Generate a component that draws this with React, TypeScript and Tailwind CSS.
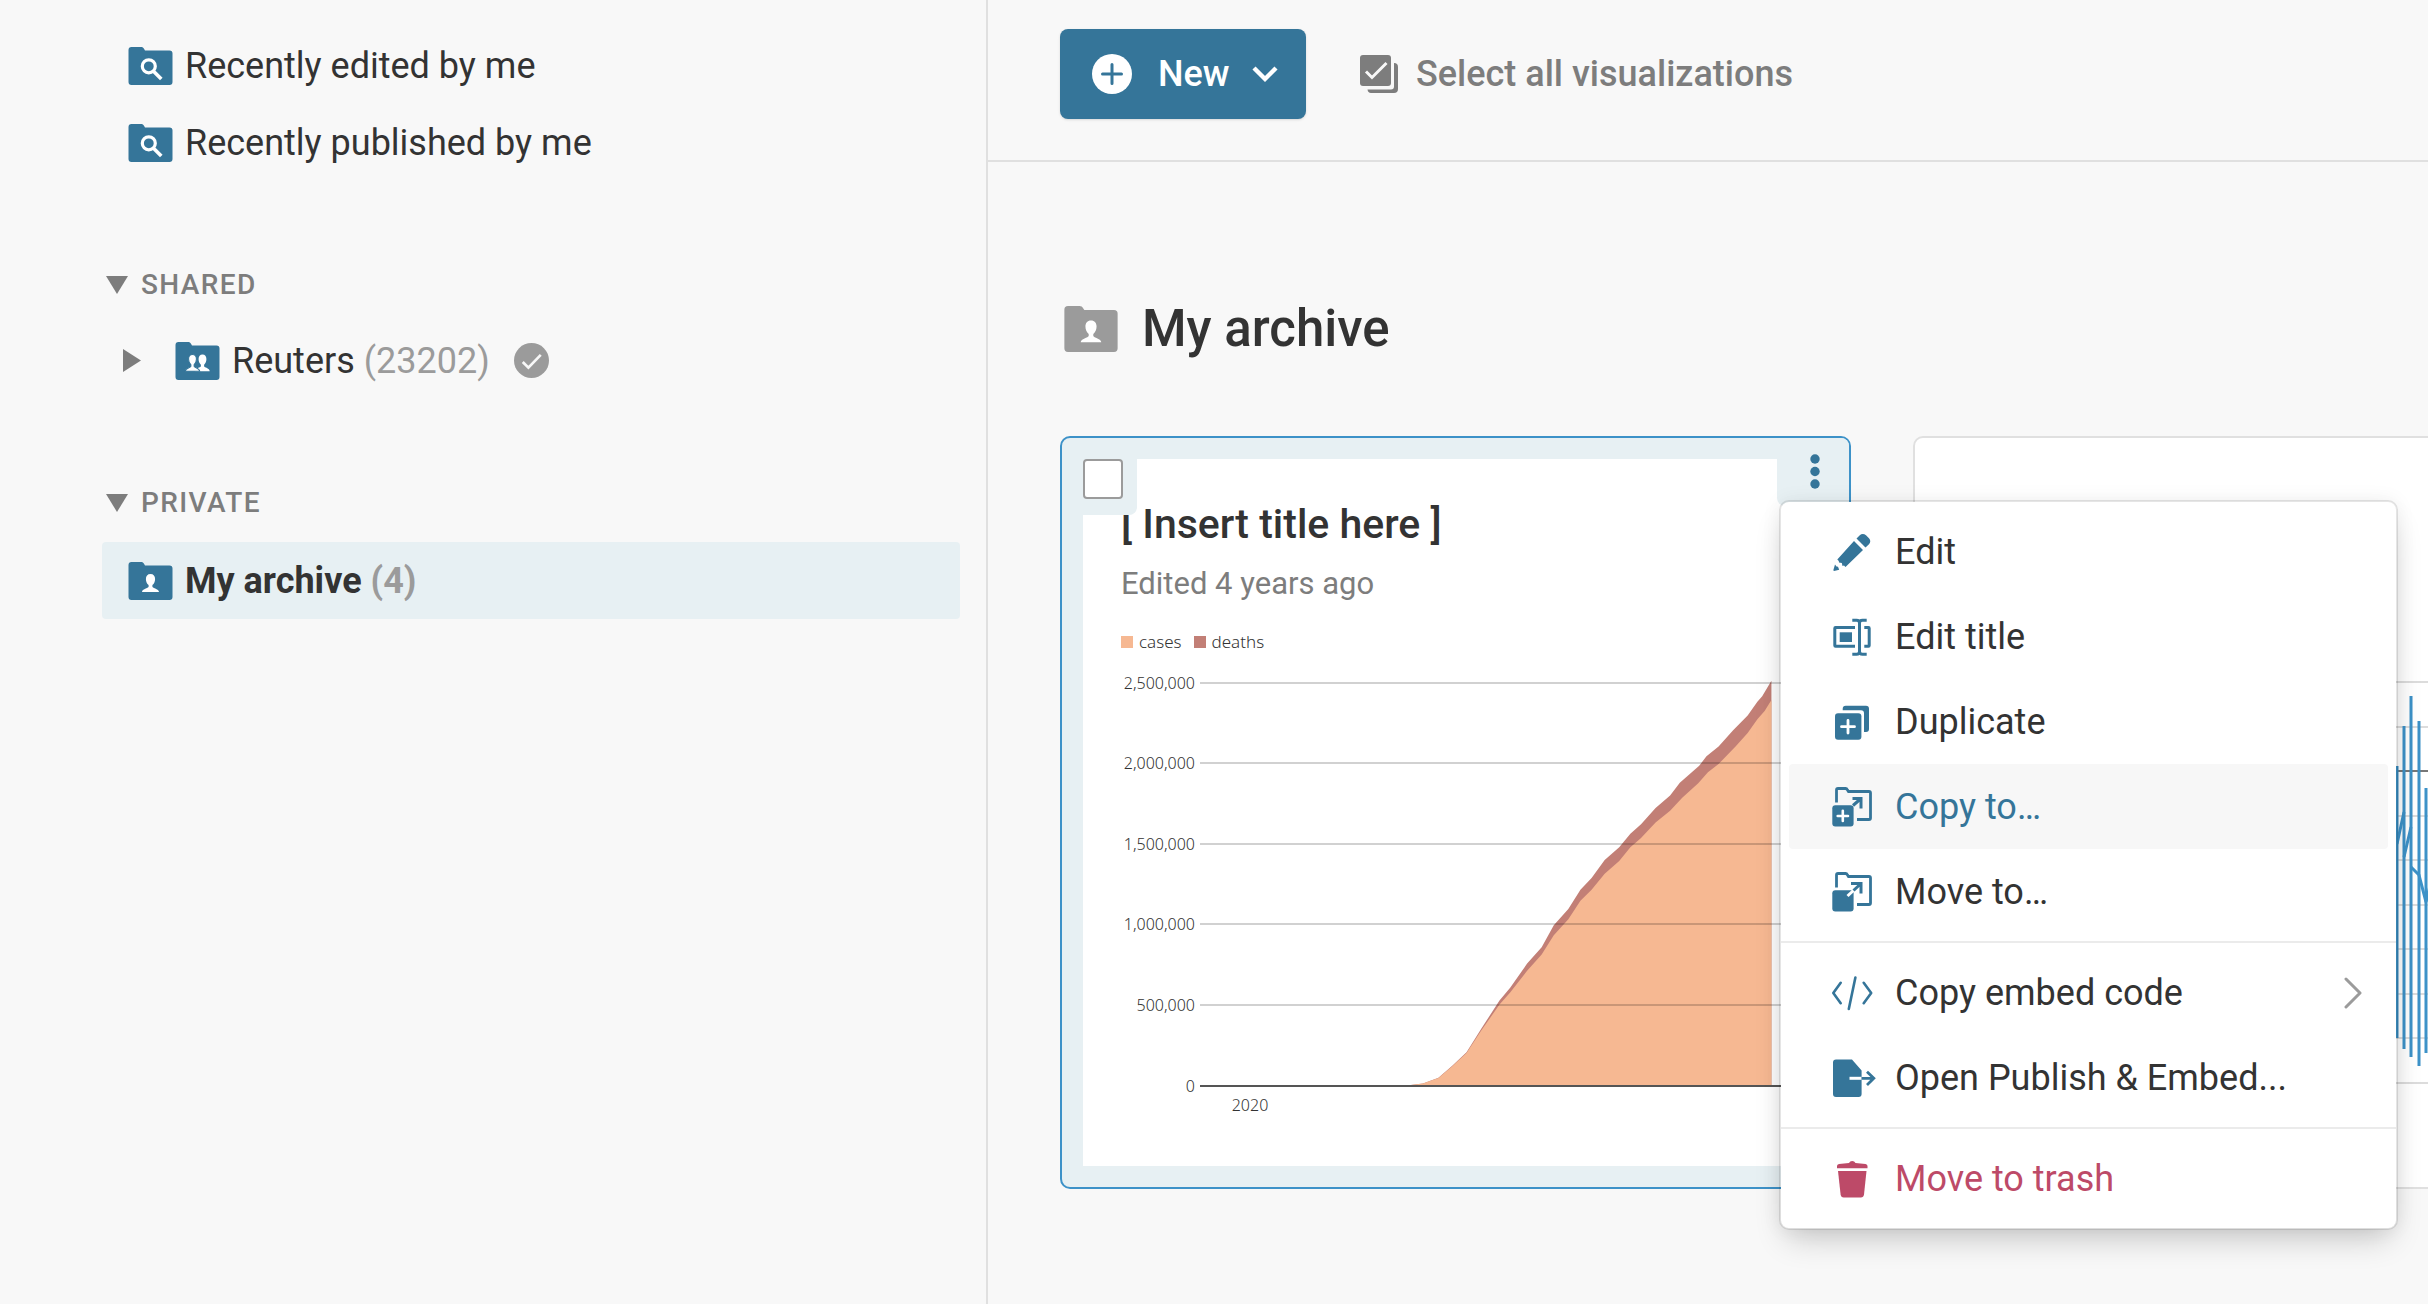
import React from "react";

type IconProps = { className?: string };

function FolderShape({ className, children }: IconProps & { children?: React.ReactNode }) {
  return (
    <svg viewBox="0 0 44 38" className={className} aria-hidden="true">
      <path
        fill="currentColor"
        d="M3 0H12.500C14 0 14.800 .600 15.500 1.800L16.500 3.400H41A3 3 0 0 1 44 6.400V35A3 3 0 0 1 41 38H3A3 3 0 0 1 0 35V3A3 3 0 0 1 3 0Z"
      />
      {children}
    </svg>
  );
}

function SearchFolder({ className }: IconProps) {
  return (
    <FolderShape className={className}>
      <g fill="none" stroke="#fff" strokeWidth="3.200">
        <circle cx="20.300" cy="19.300" r="6.500" />
        <path d="M25 24.200L32.800 32" strokeWidth="3.600" />
      </g>
    </FolderShape>
  );
}

const BUST =
  "M0 -6.500C3 -6.500 4.600 -4.400 4.600 -1.500C4.600 1 3.600 3.300 1.900 4.600V6.200C2.200 7.600 8.500 8.400 8.500 11.500H-8.500C-8.500 8.400 -2.200 7.600 -1.900 6.200V4.600C-3.600 3.300 -4.600 1 -4.600 -1.500C-4.600 -4.400 -3 -6.500 0 -6.500Z";

function PersonFolder({ className }: IconProps) {
  return (
    <FolderShape className={className}>
      <path d={BUST} fill="#fff" transform="translate(22 18.500)" />
    </FolderShape>
  );
}

function TeamFolder({ className }: IconProps) {
  return (
    <FolderShape className={className}>
      <path d={BUST} fill="#fff" transform="translate(27 18.500) scale(.85 .93)" />
      <path d={BUST} fill="#fff" stroke="#357599" strokeWidth="1.200" transform="translate(17 18.500) scale(.85 .93)" />
    </FolderShape>
  );
}

function Triangle({ open }: { open: boolean }) {
  return open ? (
    <svg viewBox="0 0 22 18" className="h-[18px] w-[22px]" aria-hidden="true">
      <path d="M0 0H22L11 18Z" fill="currentColor" />
    </svg>
  ) : (
    <svg viewBox="0 0 18 23" className="h-[23px] w-[18px]" aria-hidden="true">
      <path d="M0 0L18 11.500L0 23Z" fill="currentColor" />
    </svg>
  );
}

function MenuIcon({ children }: { children: React.ReactNode }) {
  return (
    <svg viewBox="0 0 40 40" className="h-10 w-10 shrink-0 overflow-visible" fill="currentColor" aria-hidden="true">
      {children}
    </svg>
  );
}

const pencilIcon = (
  <MenuIcon>
    <path d="M22 9L31 18L13.500 35L12 33.500L10.500 34L9.800 31L7 30.500L6.800 29L5.300 27.500Z" />
    <path d="M24.500 6.500L27.800 3.300C29.500 1.600 32 1.600 34 3.300L37 6.300C38.700 8.300 38.700 10.500 37 12.200L33.500 15.500Z" />
    <path d="M3 32.500L4.500 34.500L6 34.800L7.200 37.800L2 39L1.300 38.300Z" />
  </MenuIcon>
);

const renameIcon = (
  <MenuIcon>
    <g fill="none" stroke="currentColor" strokeWidth="3">
      <path d="M23 10.500H3.500Q2.800 10.500 2.800 11.200V28.500Q2.800 29.200 3.500 29.200H23" />
      <path d="M32.300 10.500H36.500Q37.200 10.500 37.200 11.200V28.500Q37.200 29.200 36.500 29.200H32.300" />
      <path d="M20.300 3.300H24.500Q27.500 3.300 27.500 6V34.500Q27.500 37.200 24.500 37.200H20.300M34.700 3.300H30.500Q27.500 3.300 27.500 6M27.500 34.500Q27.500 37.200 30.500 37.200H34.700" />
    </g>
    <rect x="7.700" y="15.300" width="12.300" height="9.700" />
  </MenuIcon>
);

const duplicateIcon = (
  <MenuIcon>
    <rect x="3" y="11.300" width="26.400" height="26.400" rx="3" />
    <path d="M10.700 8.300V6.700A3 3 0 0 1 13.700 3.700H34A3 3 0 0 1 37 6.700V27A3 3 0 0 1 34 30H32V11.300A3 3 0 0 0 29 8.300Z" />
    <path d="M16 18.500V31M9.500 24.700H22.500" stroke="#fff" strokeWidth="2.800" strokeLinecap="round" />
  </MenuIcon>
);

const folderOutline = (
  <path
    d="M4.500 15.500V3Q4.500 1.500 6 1.500H13.500Q14.800 1.500 15.500 3L16.500 4.500H37Q38.500 4.500 38.500 6V31Q38.500 32.500 37 32.500H25"
    fill="none"
    stroke="currentColor"
    strokeWidth="2.800"
  />
);

const copyToIcon = (
  <MenuIcon>
    {folderOutline}
    <rect x="0.300" y="18.300" width="21.300" height="21.300" rx="3" />
    <path d="M10.800 23.800V34M5.700 29H16" stroke="#fff" strokeWidth="2.600" strokeLinecap="round" />
    <path d="M20.500 11.500H29V21.500M29 11.500L21 18.500" fill="none" stroke="currentColor" strokeWidth="3" />
  </MenuIcon>
);

const moveToIcon = (
  <MenuIcon>
    {folderOutline}
    <rect x="0.300" y="18.300" width="21.300" height="21.300" rx="3" />
    <path d="M15.500 24L22 18" stroke="#fff" strokeWidth="3" />
    <path d="M19 11.500H29V21.500M29 11.500L21.500 18.500" fill="none" stroke="currentColor" strokeWidth="3" />
  </MenuIcon>
);

const codeIcon = (
  <MenuIcon>
    <path
      d="M8.700 9.800L1.300 20L8.700 30.200M31.700 9.800L39.200 20L31.700 30.200M23.400 4.500L16.800 36"
      fill="none"
      stroke="currentColor"
      strokeWidth="2.600"
      strokeLinecap="round"
      strokeLinejoin="round"
    />
  </MenuIcon>
);

const publishIcon = (
  <MenuIcon>
    <path d="M4 1.500H20L29.600 12.500V36A3 3 0 0 1 26.600 39H4A3 3 0 0 1 1 36V4.500A3 3 0 0 1 4 1.500Z" />
    <path d="M17.500 20.300H29.600" stroke="#fff" strokeWidth="3" />
    <path d="M29.600 20.300H41.500M35 13.700L41.800 20.300L35 27" fill="none" stroke="currentColor" strokeWidth="2.800" />
  </MenuIcon>
);

const trashIcon = (
  <MenuIcon>
    <path d="M5 9.300V7Q5 5.500 7 5L17 3.900Q18 2 20.200 2T23.500 3.900L33.500 5Q35.500 5.500 35.500 7V9.300Z" />
    <path d="M6 12H34.500L32 35.500Q31.600 38.500 28.800 38.500H11.700Q9 38.500 8.600 35.500Z" />
  </MenuIcon>
);

function SidebarHeading({ label }: { label: string }) {
  return (
    <h2 className="mt-[66px] h-[75px]">
      <button type="button" className="flex h-full items-center gap-[13px] pl-1 text-[28px] font-medium uppercase tracking-wider text-[#7d7d7d]">
        <Triangle open />
        {label}
      </button>
    </h2>
  );
}

function Sidebar() {
  return (
    <aside className="w-[988px] shrink-0 border-r-2 border-[#e0e0e0] pt-[27px] pr-[26px] pl-[102px] text-[36px]">
      <nav>
        <a href="#edited" className="flex h-[77px] items-center gap-3 pl-[26px]">
          <SearchFolder className="h-[38px] w-[45px] text-[#357599]" />
          Recently edited by me
        </a>
        <a href="#published" className="flex h-[77px] items-center gap-3 pl-[26px]">
          <SearchFolder className="h-[38px] w-[45px] text-[#357599]" />
          Recently published by me
        </a>
        <SidebarHeading label="Shared" />
        <div className="flex h-[77px] items-center pl-[21px]">
          <button type="button" aria-label="Expand Reuters" className="mr-[34px] text-[#7d7d7d]">
            <Triangle open={false} />
          </button>
          <a href="#reuters" className="flex items-center gap-3">
            <TeamFolder className="h-[38px] w-[45px] text-[#357599]" />
            <span>
              Reuters <span className="text-[#9b9b9b]">(23202)</span>
            </span>
          </a>
          <svg viewBox="0 0 34 34" className="ml-6 size-[35px]" aria-hidden="true">
            <circle cx="17" cy="17" r="17" fill="#9b9b9b" />
            <path d="M8.500 18.500L14 24L26 11.500" fill="none" stroke="#f8f8f8" strokeWidth="2.600" />
          </svg>
        </div>
        <SidebarHeading label="Private" />
        <a href="#archive" className="mt-0.5 flex h-[77px] items-center gap-3 rounded bg-[#e7f0f3] pl-[26px] font-bold">
          <PersonFolder className="h-[38px] w-[45px] text-[#357599]" />
          <span>
            My archive <span className="text-[#9b9b9b]">(4)</span>
          </span>
        </a>
      </nav>
    </aside>
  );
}

function Toolbar() {
  return (
    <div className="flex items-center gap-[54px] border-b-2 border-[#e0e0e0] pt-[29px] pb-[41px] pl-[72px]">
      <button type="button" className="flex h-[90px] w-[246px] items-center rounded-lg bg-[#357599] pl-8 text-[36px] font-medium text-white shadow-sm">
        <svg viewBox="0 0 40 40" className="size-10" aria-hidden="true">
          <circle cx="20" cy="20" r="20" fill="#fff" />
          <path d="M20 10.500V29.500M10.500 20H29.500" stroke="#357599" strokeWidth="3" strokeLinecap="round" />
        </svg>
        <span className="ml-[26px]">New</span>
        <svg viewBox="0 0 26 18" className="ml-[22px] h-[18px] w-[26px]" aria-hidden="true">
          <path d="M2 3L13 14L24 3" fill="none" stroke="#fff" strokeWidth="4.400" />
        </svg>
      </button>
      <button type="button" className="flex items-center gap-[18px] text-[36px] font-medium text-[#7d7d7d]">
        <svg viewBox="0 0 38 38" className="size-[38px]" aria-hidden="true">
          <rect width="31" height="31" rx="3" fill="currentColor" />
          <path d="M34 8A4 4 0 0 1 38 12V34A4 4 0 0 1 34 38H11A4 4 0 0 1 7.500 34.500H31A3 3 0 0 0 34 31.500Z" fill="currentColor" />
          <path d="M6 16.500L12 22.500L26.500 8" fill="none" stroke="#f8f8f8" strokeWidth="3" />
        </svg>
        Select all visualizations
      </button>
    </div>
  );
}

const TICKS = [
  { label: "2,500,000", y: 23 },
  { label: "2,000,000", y: 103 },
  { label: "1,500,000", y: 184 },
  { label: "1,000,000", y: 264 },
  { label: "500,000", y: 345 },
];

const TOTAL_EDGE =
  "765,1224 790,1220 822,1204 850,1172 880,1134 910,1070 948,992 970,957 1005,890 1035,845 1060,785 1090,740 1115,687 1138,655 1165,605 1195,570 1218,533 1240,507 1270,462 1300,428 1320,393 1360,346 1375,320 1400,293 1430,248 1460,208 1480,170 1490,155 1509,112";
const CASES_EDGE =
  "765,1224 790,1220 822,1205 850,1173 880,1136 910,1075 948,1003 970,970 1005,910 1035,865 1060,812 1090,768 1115,717 1138,687 1165,643 1195,608 1218,570 1240,545 1270,502 1300,470 1325,434 1358,394 1378,364 1400,341 1435,293 1460,256 1480,218 1495,195 1509,165";

function CasesChart() {
  return (
    <svg viewBox="0 0 707 460" className="h-[460px] w-[707px] font-['Noto_Sans'] text-[16px] font-light" fill="#333" role="img" aria-label="Cases and deaths">
      <g transform="translate(-81 -20) scale(.4847 .3635)">
        <polygon points={TOTAL_EDGE + " 1509,1226 765,1226"} fill="#c27f76" />
        <polygon points={CASES_EDGE + " 1509,1226 765,1226"} fill="#f6b892" />
      </g>
      {TICKS.map((tick) => (
        <g key={tick.label}>
          <text x="74" y={tick.y + 6} textAnchor="end">
            {tick.label}
          </text>
          <path d={`M79 ${tick.y}H707`} stroke="#000" strokeOpacity=".18" strokeWidth="2" />
        </g>
      ))}
      <text x="74" y="432" textAnchor="end">
        0
      </text>
      <path d="M79 426H707" stroke="#555" strokeWidth="2" />
      <text x="129" y="451" textAnchor="middle">
        2020
      </text>
    </svg>
  );
}

function RangeChart() {
  const bars = [
    [482, 328, 600],
    [489, 288, 611],
    [496, 258, 619],
    [504, 283, 628],
    [511, 350, 615],
  ];
  return (
    <svg viewBox="0 0 600 748" className="h-[748px] w-[600px]" role="img" aria-label="Ranges">
      {[0, 1, 2, 3, 4, 5, 6, 7, 8, 9].map((i) => (
        <path
          key={i}
          d={`M20 ${244 + Math.round(i * 44.5)}H600`}
          stroke={i === 2 ? "#777" : "#dcdcdc"}
          strokeWidth="2"
        />
      ))}
      {bars.map(([x, top, bottom]) => (
        <path key={x} d={`M${x} ${top}V${bottom}`} stroke="#3d92c8" strokeWidth="3" />
      ))}
      <path d="M482 406L489 374M489 419L496 389M496 429L504 437L511 464L518 435" fill="none" stroke="#3d92c8" strokeWidth="3" />
    </svg>
  );
}

type Item = { label: string; icon: React.ReactNode; active?: boolean; danger?: boolean; submenu?: boolean };

const MENU: Item[][] = [
  [
    { label: "Edit", icon: pencilIcon },
    { label: "Edit title", icon: renameIcon },
    { label: "Duplicate", icon: duplicateIcon },
    { label: "Copy to…", icon: copyToIcon, active: true },
    { label: "Move to…", icon: moveToIcon },
  ],
  [
    { label: "Copy embed code", icon: codeIcon, submenu: true },
    { label: "Open Publish & Embed...", icon: publishIcon },
  ],
  [{ label: "Move to trash", icon: trashIcon, danger: true }],
];

function ContextMenu() {
  return (
    <div
      role="menu"
      className="absolute top-[62px] left-[717px] z-10 w-[619px] divide-y-2 divide-[#ebebeb] rounded-[10px] border-2 border-black/10 bg-white bg-clip-padding text-[36px] shadow-[0_16px_32px_-8px_rgba(0,0,0,0.2),0_0_20px_rgba(0,0,0,0.06)]"
    >
      {MENU.map((section, i) => (
        <div key={i} className="px-2 py-[7px]">
          {section.map((item) => (
            <button
              key={item.label}
              type="button"
              role="menuitem"
              className={
                "flex h-[85px] w-full items-center gap-[23px] rounded pr-[26px] pl-[43px] " +
                (item.active ? "bg-[#f7f7f7] text-[#357599]" : item.danger ? "text-[#bd4a68]" : "text-[#333]")
              }
            >
              <span className={item.danger ? "text-[#bd4a68]" : "text-[#357599]"}>{item.icon}</span>
              {item.label}
              {item.submenu && (
                <svg viewBox="0 0 18 32" className="ml-auto h-8 w-[18px]" aria-hidden="true">
                  <path d="M2 2L16 16L2 30" fill="none" stroke="#9b9b9b" strokeWidth="3" strokeLinecap="round" strokeLinejoin="round" />
                </svg>
              )}
            </button>
          ))}
        </div>
      ))}
    </div>
  );
}

function SelectedCard() {
  return (
    <article className="relative w-[791px] shrink-0 rounded-[10px] border-2 border-[#3d92c8] bg-[#e7f0f3] p-[21px]">
      <div className="h-[707px] overflow-hidden bg-white pt-[41px] pl-[38px]">
        <h3 className="text-[41px] leading-[48px] font-medium">[ Insert title here ]</h3>
        <p className="mt-4 text-[31px] leading-10 text-[#7d7d7d]">Edited 4 years ago</p>
        <div className="mt-[26px] flex h-6 items-center gap-3 font-['Noto_Sans'] text-[17px] font-light">
          <span className="flex items-center gap-[6px]">
            <span className="size-3 bg-[#f6b892]" />
            cases
          </span>
          <span className="flex items-center gap-[6px]">
            <span className="size-3 bg-[#c27f76]" />
            deaths
          </span>
        </div>
        <div className="mt-[6px]">
          <CasesChart />
        </div>
      </div>
      <div className="absolute top-[21px] left-[21px] h-14 w-[54px] rounded-br-lg bg-[#e7f0f3]">
        <input
          type="checkbox"
          aria-label="Select visualization"
          className="block size-10 appearance-none rounded border-2 border-[#9b9b9b] bg-white"
        />
      </div>
      <button
        type="button"
        aria-label="More actions"
        className="absolute top-0 right-0 flex h-[68px] w-[72px] justify-center rounded-tr-lg rounded-bl-lg bg-[#e7f0f3] pt-4 pl-1 text-[#357599]"
      >
        <svg viewBox="0 0 10 36" className="h-9 w-[10px]" fill="currentColor" aria-hidden="true">
          <circle cx="5" cy="5" r="4.700" />
          <circle cx="5" cy="17.500" r="4.700" />
          <circle cx="5" cy="30" r="4.700" />
        </svg>
      </button>
      <ContextMenu />
    </article>
  );
}

export default function App() {
  return (
    <div className="flex min-h-screen overflow-hidden bg-[#f8f8f8] font-['Roboto',sans-serif] text-[#333]">
      <Sidebar />
      <main className="min-w-0 flex-1">
        <Toolbar />
        <section className="pt-[135px] pl-[72px]">
          <h1 className="flex items-center gap-6 pl-1 text-[51px] leading-[64px] font-medium">
            <PersonFolder className="h-[46px] w-[54px] text-[#9b9b9b]" />
            My archive
          </h1>
          <div className="mt-[75px] flex gap-[62px]">
            <SelectedCard />
            <article className="w-[791px] shrink-0 overflow-hidden rounded-[10px] border-2 border-[#e0e0e0] bg-white">
              <RangeChart />
            </article>
          </div>
        </section>
      </main>
    </div>
  );
}
